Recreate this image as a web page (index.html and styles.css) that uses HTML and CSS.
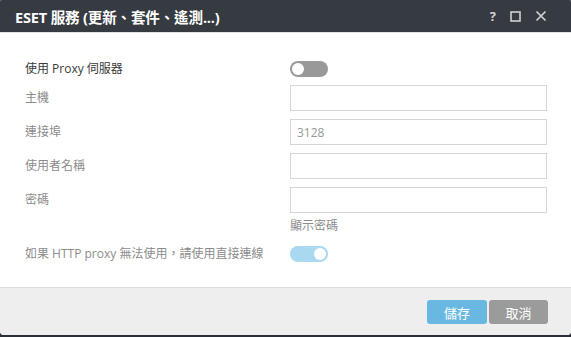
FILE: index.html
```html
<!DOCTYPE html>
<html lang="zh-Hant">
<head>
  <meta charset="UTF-8" />
  <meta name="viewport" content="width=device-width, initial-scale=1.0"/>
  <title>ESET 服務</title>
  <link rel="stylesheet" href="styles.css">
</head>
<body>
  <div class="dialog">
    <div class="titlebar">
      <div class="title">ESET 服務 (更新、套件、遙測...)</div>
      <div class="tools">
        <span class="help">?</span>
        <svg width="11" height="11" viewBox="0 0 11 11"><rect x="1" y="1" width="9" height="9" fill="none" stroke="#cfd1d4" stroke-width="1.6"/></svg>
        <svg width="12" height="12" viewBox="0 0 12 12"><path d="M1.5 1.5 L10.5 10.5 M10.5 1.5 L1.5 10.5" stroke="#cfd1d4" stroke-width="1.7" fill="none"/></svg>
      </div>
    </div>

    <div class="content">
      <div class="form">
        <div class="label strong">使用 Proxy 伺服器</div>
        <div><span class="switch off"></span></div>

        <div class="label">主機</div>
        <input type="text" class="field">

        <div class="label">連接埠</div>
        <input type="text" class="field" value="3128">

        <div class="label">使用者名稱</div>
        <input type="text" class="field">

        <div class="label">密碼</div>
        <input type="password" class="field">

        <div class="empty"></div>
        <div class="showpwd">顯示密碼</div>

        <div class="label fallback">如果 HTTP proxy 無法使用，請使用直接連線</div>
        <div class="fallback"><span class="switch on"></span></div>
      </div>
    </div>

    <div class="footer">
      <button class="btn save">儲存</button>
      <button class="btn cancel">取消</button>
    </div>
  </div>
</body>
</html>
```

FILE: styles.css
```css
body {
  margin: 0;
  padding: 0;
  background: #2b3036;
  font-family: "Open Sans", "Noto Sans CJK TC", sans-serif;
}

.dialog {
  width: 571px;
  height: 335px;
  background: #fff;
  border-radius: 2px 2px 4px 4px;
  overflow: hidden;
  display: flex;
  flex-direction: column;
}

.titlebar {
  height: 33px;
  background: #363a41;
  border-bottom: 1px solid #e4e4e4;
  box-sizing: border-box;
  display: flex;
  align-items: center;
  justify-content: space-between;
  padding: 0 24px 0 15px;
}

.title {
  color: #fff;
  font-weight: bold;
  font-size: 14.6px;
  letter-spacing: -0.2px;
}

.tools {
  display: flex;
  align-items: center;
  gap: 14px;
}

.help {
  color: #cfd1d4;
  font-weight: bold;
  font-size: 13px;
}

.content {
  flex: 1;
  padding: 28px 24px 0 25px;
}

.form {
  display: grid;
  grid-template-columns: 265px 257px;
  row-gap: 8px;
  align-items: center;
}

.label {
  font-size: 12px;
  line-height: 16px;
  color: #8c8c8c;
}

.label.strong {
  color: #3a3a3a;
}

.field {
  height: 26px;
  box-sizing: border-box;
  border: 1px solid #d6d6d6;
  padding: 0 6px;
  font-family: inherit;
  font-size: 12px;
  color: #999;
  outline: none;
  margin: 0;
}

.showpwd {
  font-size: 12px;
  color: #8c8c8c;
  line-height: 18px;
  margin-top: -4px;
}

.fallback {
  margin-top: 3px;
}

.switch {
  display: block;
  position: relative;
  width: 38px;
  height: 16px;
  border-radius: 8px;
}

.switch::after {
  content: "";
  position: absolute;
  top: 2px;
  width: 12px;
  height: 12px;
  border-radius: 50%;
  background: #fff;
}

.switch.off {
  background: #999;
}

.switch.off::after {
  left: 2px;
}

.switch.on {
  background: #a9d8f1;
}

.switch.on::after {
  right: 2px;
}

.footer {
  height: 48px;
  box-sizing: border-box;
  background: #eeeeee;
  border-top: 1px solid #dedede;
  display: flex;
  justify-content: flex-end;
  align-items: flex-start;
  gap: 2px;
  padding: 12px 23px 0 0;
}

.btn {
  height: 24px;
  width: 60px;
  border: none;
  border-radius: 3px;
  color: #fff;
  font-family: inherit;
  font-size: 13px;
  padding: 0;
}

.save {
  background: #69b8e1;
}

.cancel {
  width: 59px;
  background: #9b9b9b;
}
```
